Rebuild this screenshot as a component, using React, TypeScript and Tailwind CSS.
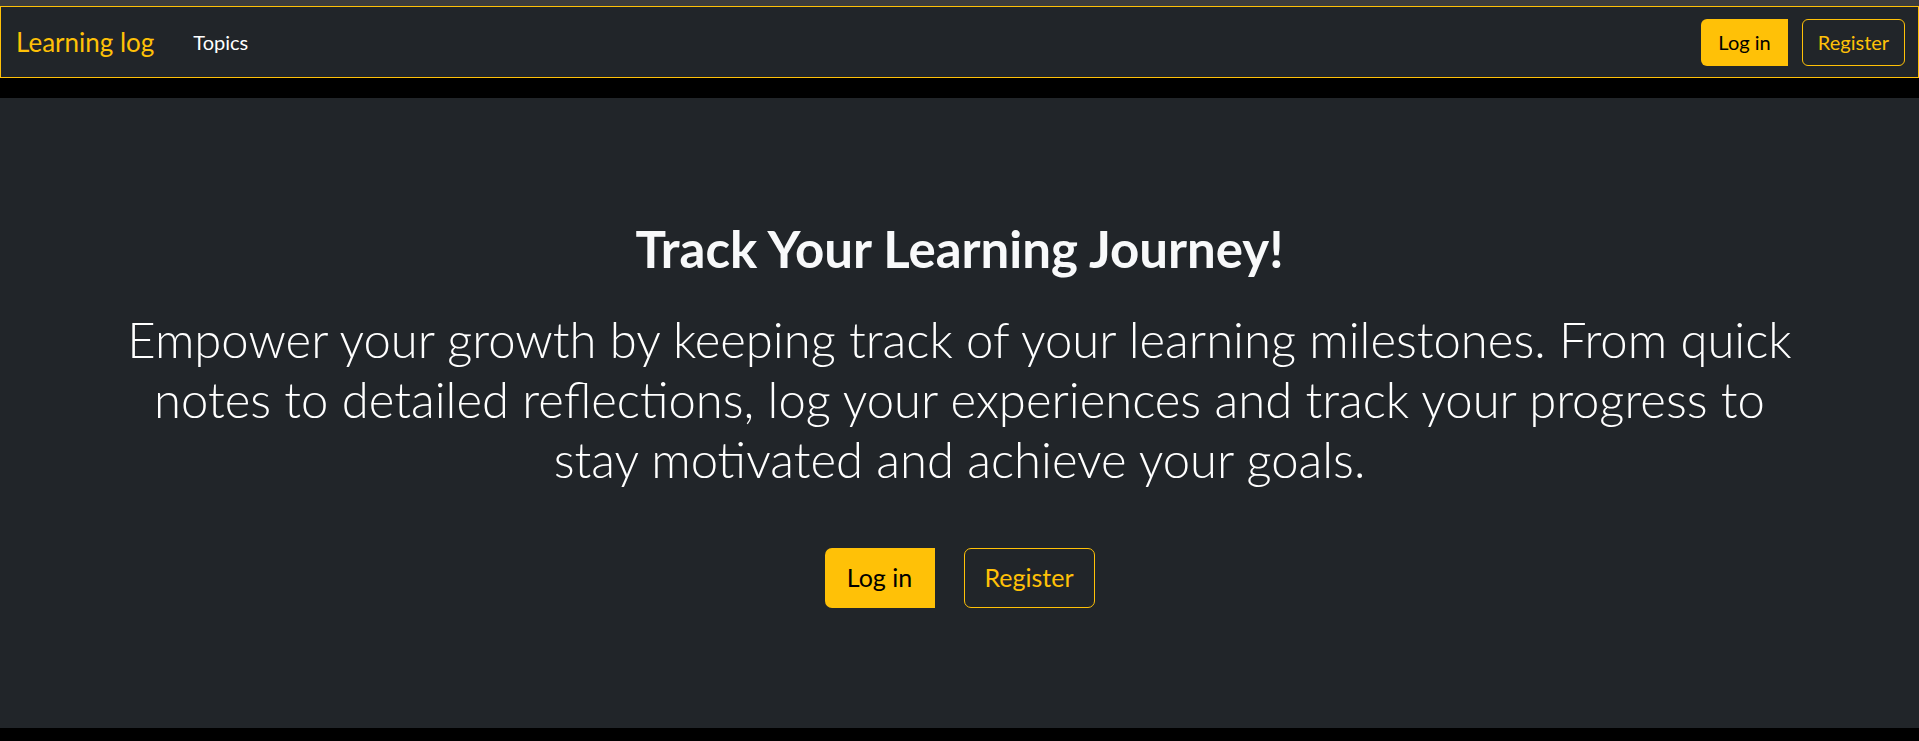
import React from "react";

export default function App() {
  return (
    <div className="min-h-[741px] bg-black font-['Lato',sans-serif]">
      <div className="h-[6px] bg-[#3c3c3c]" />
      <nav className="flex h-[72px] items-center border border-[#ffc107] bg-[#212529] pl-[15px] pr-[13px]">
        <a className="text-[26px] leading-none text-[#ffc107]">Learning log</a>
        <a className="ml-[39px] text-[20px] leading-none text-white">Topics</a>
        <div className="ml-auto flex gap-[14px]">
          <button className="h-[47px] w-[87px] rounded-l-[6px] bg-[#ffc107] text-[20px] text-black">
            Log in
          </button>
          <button className="h-[47px] w-[103px] rounded-[6px] border border-[#ffc107] text-[20px] text-[#ffc107]">
            Register
          </button>
        </div>
      </nav>
      <div className="h-[20px]" />
      <main className="flex h-[630px] flex-col items-center bg-[#212529] pt-[121px] text-center">
        <h1 className="text-[51px] font-bold leading-[60px] text-[#f8f9fa]">
          Track Your Learning Journey!
        </h1>
        <p className="mt-[30px] whitespace-nowrap text-[49px] font-light leading-[60px] text-white">
          Empower your growth by keeping track of your learning milestones. From quick
          <br />
          notes to detailed reflections, log your experiences and track your progress to
          <br />
          stay motivated and achieve your goals.
        </p>
        <div className="mt-[59px] flex gap-[29px]">
          <button className="h-[60px] w-[110px] rounded-l-[7px] bg-[#ffc107] text-[25px] text-black">
            Log in
          </button>
          <button className="h-[60px] w-[131px] rounded-[7px] border border-[#ffc107] text-[25px] text-[#ffc107]">
            Register
          </button>
        </div>
      </main>
    </div>
  );
}
